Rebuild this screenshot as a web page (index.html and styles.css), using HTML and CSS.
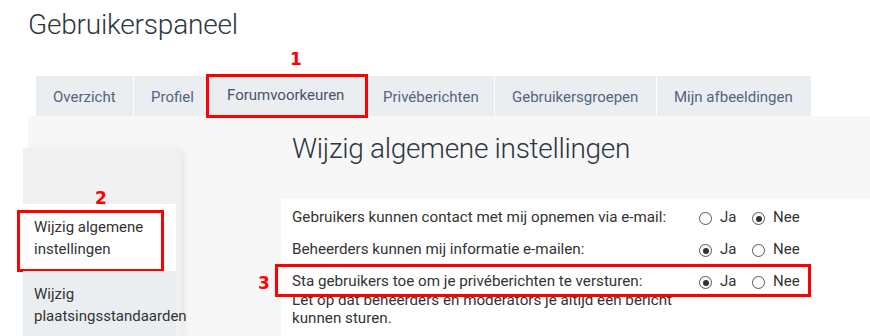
FILE: index.html
```html
<!DOCTYPE html>
<html lang="nl">
<head>
<meta charset="UTF-8" />
<title>Gebruikerspaneel</title>
<link rel="stylesheet" href="styles.css">
</head>
<body>
  <div id="page">
    <h2 class="page-title">Gebruikerspaneel</h2>

    <div class="tabs">
      <a class="tab">Overzicht</a>
      <a class="tab">Profiel</a>
      <a class="tab active">Forumvoorkeuren<span class="mark mark-1">1</span></a>
      <a class="tab">Privéberichten</a>
      <a class="tab">Gebruikersgroepen</a>
      <a class="tab">Mijn afbeeldingen</a>
    </div>

    <div class="panel">
      <div class="sidebar">
        <div class="side-item active">Wijzig algemene instellingen<span class="mark mark-2">2</span></div>
        <div class="side-item">Wijzig plaatsingsstandaarden</div>
      </div>

      <div class="main">
        <h3 class="main-title">Wijzig algemene instellingen</h3>
        <div class="form">
          <div class="row">
            <label class="row-label">Gebruikers kunnen contact met mij opnemen via e-mail:</label>
            <div class="choices">
              <span class="radio"></span><span class="choice">Ja</span>
              <span class="radio checked"></span><span class="choice">Nee</span>
            </div>
          </div>
          <div class="row">
            <label class="row-label">Beheerders kunnen mij informatie e-mailen:</label>
            <div class="choices">
              <span class="radio checked"></span><span class="choice">Ja</span>
              <span class="radio"></span><span class="choice">Nee</span>
            </div>
          </div>
          <div class="row highlight">
            <label class="row-label">Sta gebruikers toe om je privéberichten te versturen:</label>
            <div class="choices">
              <span class="radio checked"></span><span class="choice">Ja</span>
              <span class="radio"></span><span class="choice">Nee</span>
            </div>
            <span class="mark mark-3">3</span>
          </div>
          <p class="explain">Let op dat beheerders en moderators je altijd een bericht<br />kunnen sturen.</p>
        </div>
      </div>
    </div>
  </div>
</body>
</html>
```

FILE: styles.css
```css
html, body {
  margin: 0; padding: 0;
  height: 336px;
  background: #fff;
  font-family: Roboto, "Liberation Sans", sans-serif;
  color: #333;
  overflow: hidden;
}

#page {
  margin-left: 28px;
}

.page-title {
  margin: 0;
  padding-top: 8px;
  height: 68px;
  font-size: 28px;
  letter-spacing: -0.2px;
  font-weight: 300;
  line-height: 34px;
  color: #2d3641;
}

/* tabs */
.tabs {
  display: flex;
  margin-left: 8px;
  height: 40px;
}

.tab {
  position: relative;
  background: #ebeef0;
  color: #536482;
  font-size: 15px;
  line-height: 42px;
  padding: 0 17px;
  border-right: 1px solid #fff;
}

.tab.active {
  color: #47536b;
  line-height: 38px;
  padding-left: 19px;
  outline: 3px solid red;
  outline-offset: -1px;
  z-index: 2;
}

.tab:nth-child(1) { width: 63px; }
.tab:nth-child(2) { width: 39px; }
.tab:nth-child(3) { width: 121px; }
.tab:nth-child(4) { width: 94px; }
.tab:nth-child(5) { width: 127px; }
.tab:nth-child(6) { width: 120px; border-right: none; }

/* annotation numbers */
.mark {
  position: absolute;
  color: red;
  font-family: "DejaVu Sans", sans-serif;
  font-weight: bold;
  font-size: 17px;
  line-height: 20px;
}
.mark-1 { left: 82px; top: -27px; }
.mark-2 { left: 72px; top: -16px; }
.mark-3 { left: -34px; top: 8px; }

/* panel */
.panel {
  display: flex;
  background: #f7f7f7;
  height: 220px;
}

.sidebar {
  margin: 32px 0 0 -5px;
  width: 158px;
  padding-top: 56px;
  background: #f1f1f1;
  border-top-right-radius: 8px;
  box-shadow: 4px 0 6px rgba(0, 0, 0, 0.06);
}

.side-item {
  position: relative;
  margin-right: 5px;
  background: #ebeef0;
  font-size: 15px;
  line-height: 22px;
  color: #333;
  padding: 12px 0 11px 11px;
}

.side-item.active {
  background: #fff;
}

.side-item.active::after {
  content: "";
  position: absolute;
  left: -6px; top: 6px;
  width: 141px; height: 56px;
  border: 3px solid red;
}

.main {
  flex: 1;
  margin-left: 100px;
}

.main-title {
  margin: 0;
  padding: 16px 0 0 11px;
  height: 67px;
  font-size: 28px;
  letter-spacing: -0.3px;
  font-weight: 300;
  line-height: 34px;
  color: #2d3641;
}

.form {
  background: #fff;
  padding: 2px 0 0 11px;
  height: 200px;
  font-size: 15.2px;
  color: #333;
}

.row {
  position: relative;
  display: flex;
  align-items: center;
  height: 32px;
}

.row-label {
  width: 407px;
}

.choices {
  display: flex;
  align-items: center;
}

.radio {
  width: 11px; height: 11px;
  border: 1px solid #555;
  border-radius: 50%;
  margin-right: 8px;
  margin-top: 3px;
  position: relative;
  background: #fff;
}

.radio.checked::after {
  content: "";
  position: absolute;
  left: 2.5px; top: 2.5px;
  width: 6px; height: 6px;
  border-radius: 50%;
  background: #333;
}

.choice {
  font-size: 15px;
  width: 32px;
}

.row.highlight::before {
  content: "";
  position: absolute;
  left: -17px; top: -1px;
  width: 530px; height: 27px;
  border: 3px solid red;
}

.explain {
  margin: -6px 0 0;
  line-height: 18px;
}
```
